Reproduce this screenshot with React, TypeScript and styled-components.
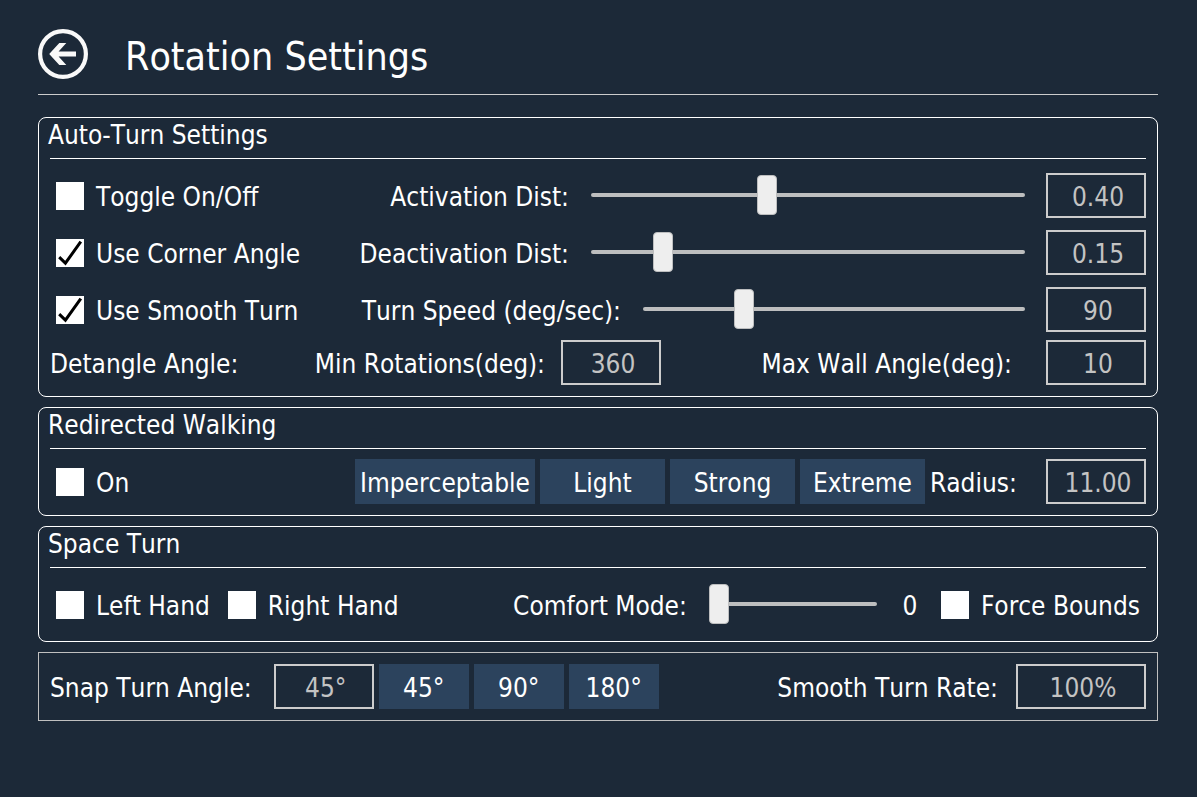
import React, { useId, useState } from 'react';
import styled, { createGlobalStyle } from 'styled-components';

const GlobalStyle = createGlobalStyle`
  *, *::before, *::after { box-sizing: border-box; }
  body {
    margin: 0;
    background: #1c2938;
    color: #ffffff;
    font-family: Tahoma, "DejaVu Sans Condensed", "Open Sans", sans-serif;
    font-size: 26px;
    font-kerning: none;
    line-height: 36px;
  }
  button, input { font: inherit; font-kerning: none; }
`;

const Page = styled.main`
  display: flex;
  flex-direction: column;
  gap: 10px;
  min-height: 100vh;
  padding: 29px 39px 29px 38px;
`;

const Header = styled.header`
  display: flex;
  align-items: center;
  gap: 37px;
  height: 66px;
  margin-bottom: 12px;
  padding-bottom: 15px;
  border-bottom: 1px solid #cccccc;
`;

const BackButton = styled.button`
  width: 50px;
  height: 50px;
  padding: 0;
  border: 0;
  background: none;
  color: #f9f9f9;
  cursor: pointer;

  svg { display: block; }
`;

const PageTitle = styled.h1`
  margin: 0;
  padding-top: 6px;
  font-size: 39px;
  font-weight: 400;
  line-height: 50px;
  white-space: nowrap;
`;

const Panel = styled.section<{ $plain?: boolean; $bottom?: number }>`
  padding: ${p => (p.$plain ? '11px' : `0 11px ${p.$bottom ?? 11}px`)};
  border: 1px solid ${p => (p.$plain ? '#c0c0c0' : '#ffffff')};
  border-radius: ${p => (p.$plain ? '0' : '8px')};
`;

const PanelTitle = styled.h2`
  height: 41px;
  margin: 0;
  border-bottom: 1px solid #ffffff;
  font-size: inherit;
  font-weight: 400;
  line-height: 34px;
  text-indent: -2px;
`;

const Rows = styled.div<{ $top: number }>`
  display: flex;
  flex-direction: column;
  gap: 12px;
  padding-top: ${p => p.$top}px;
`;

const Row = styled.div<{ $tight?: boolean }>`
  display: flex;
  align-items: center;
  height: 45px;
  margin-top: ${p => (p.$tight ? '-4px' : '0')};
  white-space: nowrap;
`;

const LeadCell = styled.div<{ $width: number }>`
  display: flex;
  flex: 0 0 ${p => p.$width}px;
`;

const Spacer = styled.div`
  flex: 1;
`;

const Caption = styled.span`
  padding-top: 2px;
`;

const FieldLabel = styled.label<{ $width?: number; $gap: number }>`
  flex: none;
  width: ${p => (p.$width ? `${p.$width}px` : 'auto')};
  margin-right: ${p => p.$gap}px;
  padding-top: 2px;
  text-align: right;
`;

const CheckLabel = styled.label`
  display: flex;
  align-items: center;
  gap: 12px;
  padding: 0 6px;
  cursor: pointer;
`;

const CheckGroup = styled.div`
  display: flex;
  gap: 6px;
`;

const CheckBox = styled.span`
  display: grid;
  width: 28px;
  height: 28px;

  > * { grid-area: 1 / 1; }
  svg { pointer-events: none; z-index: 1; }
  input:not(:checked) + svg { visibility: hidden; }
`;

const CheckInput = styled.input`
  appearance: none;
  width: 28px;
  height: 28px;
  margin: 0;
  background: #ffffff;
  cursor: pointer;
`;

const Slider = styled.input<{ $fixed?: number }>`
  appearance: none;
  flex: ${p => (p.$fixed ? `0 0 ${p.$fixed}px` : '1')};
  min-width: 0;
  height: 40px;
  margin: 0 21px 1px 0;
  background: transparent;
  cursor: pointer;

  &::-webkit-slider-runnable-track {
    height: 4px;
    border-radius: 2px;
    background: #bdbebf;
  }
  &::-webkit-slider-thumb {
    appearance: none;
    width: 20px;
    height: 40px;
    margin-top: -18px;
    border: 1px solid #bdbebf;
    border-radius: 4px;
    background: #eeeeee;
  }
`;

const ValueBox = styled.input<{ $width?: number }>`
  flex: none;
  width: ${p => p.$width ?? 100}px;
  height: 45px;
  padding: 2px 0 0 4px;
  border: 2px solid #cccccc;
  border-radius: 0;
  outline: none;
  background: transparent;
  color: #c3c3c3;
  text-align: center;
`;

const ButtonGroup = styled.div`
  display: flex;
  gap: 5px;
  margin-right: 5px;
`;

const PushButton = styled.button<{ $width: number }>`
  width: ${p => p.$width}px;
  height: 45px;
  padding: 2px 0 0;
  border: 0;
  background: #2c435d;
  color: #ffffff;
  text-align: center;
  cursor: pointer;
`;

const Readout = styled.output`
  width: 24px;
  margin-right: 13px;
  padding-top: 2px;
  text-align: center;
`;

function Check({ label, checked = false }: { label: string; checked?: boolean }) {
  return (
    <CheckLabel>
      <CheckBox>
        <CheckInput type="checkbox" defaultChecked={checked} />
        <svg width="28" height="28" viewBox="0 0 28 28" fill="none" aria-hidden="true">
          <path d="M3.2 18.2L9.4 24.2L24.8 2.6" stroke="#000000" strokeWidth="3" />
        </svg>
      </CheckBox>
      <Caption>{label}</Caption>
    </CheckLabel>
  );
}

interface SliderRowProps {
  check: string;
  checked?: boolean;
  label: string;
  labelWidth: number;
  max: number;
  step: number;
  initial: number;
  digits: number;
}

function SliderRow({ check, checked, label, labelWidth, max, step, initial, digits }: SliderRowProps) {
  const id = useId();
  const [value, setValue] = useState(initial);
  return (
    <Row>
      <LeadCell $width={305}>
        <Check label={check} checked={checked} />
      </LeadCell>
      <FieldLabel htmlFor={id} $width={labelWidth} $gap={22}>{label}</FieldLabel>
      <Slider
        id={id}
        type="range"
        min={0}
        max={max}
        step={step}
        value={value}
        onChange={e => setValue(Number(e.target.value))}
      />
      <ValueBox type="text" aria-label={label} value={value.toFixed(digits)} readOnly />
    </Row>
  );
}

export default function App() {
  const [snap, setSnap] = useState('45°');
  const [radius, setRadius] = useState('11.00');
  const [comfort, setComfort] = useState(0);
  const strengths: [string, number, string][] = [
    ['Imperceptable', 180, '22.00'],
    ['Light', 125, '11.00'],
    ['Strong', 125, '7.50'],
    ['Extreme', 125, '5.00'],
  ];

  return (
    <>
      <GlobalStyle />
      <Page>
        <Header>
          <BackButton type="button" aria-label="Back">
            <svg width="50" height="50" viewBox="0 0 50 50" aria-hidden="true">
              <circle cx="25" cy="25" r="22.9" fill="none" stroke="currentColor" strokeWidth="4.2" />
              <path
                d="M11.2 25L21.3 14H28.3L20.6 22.4H38V27.6H20.6L28.3 36H21.3Z"
                fill="currentColor"
              />
            </svg>
          </BackButton>
          <PageTitle>Rotation Settings</PageTitle>
        </Header>

        <Panel>
          <PanelTitle>Auto-Turn Settings</PanelTitle>
          <Rows $top={14}>
            <SliderRow check="Toggle On/Off" label="Activation Dist:" labelWidth={214} max={1} step={0.01} initial={0.4} digits={2} />
            <SliderRow check="Use Corner Angle" checked label="Deactivation Dist:" labelWidth={214} max={1} step={0.01} initial={0.15} digits={2} />
            <SliderRow check="Use Smooth Turn" checked label="Turn Speed (deg/sec):" labelWidth={266} max={360} step={1} initial={90} digits={0} />
            <Row $tight>
              <LeadCell $width={250}><Caption>Detangle Angle:</Caption></LeadCell>
              <FieldLabel htmlFor="min-rotations" $width={245} $gap={16}>Min Rotations(deg):</FieldLabel>
              <ValueBox id="min-rotations" type="text" defaultValue="360" />
              <Spacer />
              <FieldLabel htmlFor="max-wall" $gap={34}>Max Wall Angle(deg):</FieldLabel>
              <ValueBox id="max-wall" type="text" defaultValue="10" />
            </Row>
          </Rows>
        </Panel>

        <Panel>
          <PanelTitle>Redirected Walking</PanelTitle>
          <Rows $top={10}>
            <Row>
              <LeadCell $width={305}>
                <Check label="On" />
              </LeadCell>
              <ButtonGroup>
                {strengths.map(([name, width, r]) => (
                  <PushButton key={name} type="button" $width={width} onClick={() => setRadius(r)}>
                    {name}
                  </PushButton>
                ))}
              </ButtonGroup>
              <FieldLabel htmlFor="radius" $gap={0}>Radius:</FieldLabel>
              <Spacer />
              <ValueBox id="radius" type="text" value={radius} onChange={e => setRadius(e.target.value)} />
            </Row>
          </Rows>
        </Panel>

        <Panel $bottom={14}>
          <PanelTitle>Space Turn</PanelTitle>
          <Rows $top={14}>
            <Row>
              <CheckGroup>
                <Check label="Left Hand" />
                <Check label="Right Hand" />
              </CheckGroup>
              <Spacer />
              <FieldLabel htmlFor="comfort" $gap={22}>Comfort Mode:</FieldLabel>
              <Slider
                id="comfort"
                type="range"
                min={0}
                max={10}
                $fixed={168}
                value={comfort}
                onChange={e => setComfort(Number(e.target.value))}
              />
              <Readout htmlFor="comfort">{comfort}</Readout>
              <Check label="Force Bounds" />
            </Row>
          </Rows>
        </Panel>

        <Panel $plain>
          <Row>
            <FieldLabel htmlFor="snap" $gap={22}>Snap Turn Angle:</FieldLabel>
            <ButtonGroup>
              <ValueBox id="snap" type="text" value={snap} onChange={e => setSnap(e.target.value)} />
              {['45°', '90°', '180°'].map(angle => (
                <PushButton key={angle} type="button" $width={90} onClick={() => setSnap(angle)}>
                  {angle}
                </PushButton>
              ))}
            </ButtonGroup>
            <Spacer />
            <FieldLabel htmlFor="smooth-rate" $gap={18}>Smooth Turn Rate:</FieldLabel>
            <ValueBox id="smooth-rate" type="text" $width={130} defaultValue="100%" />
          </Row>
        </Panel>
      </Page>
    </>
  );
}
